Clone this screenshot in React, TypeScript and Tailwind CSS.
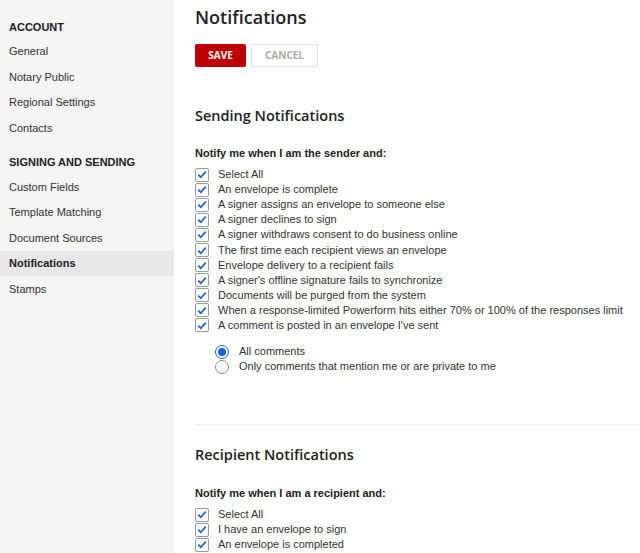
import React from "react";

const Check = () => (
  <span className="flex h-[14px] w-[14px] shrink-0 items-center justify-center rounded-[2px] border border-[#9a9a9a] bg-white">
    <svg width="10" height="9" viewBox="0 0 10 9">
      <path d="M1.2 4.6 L3.8 7.2 L8.8 1.6" fill="none" stroke="#1f5fd6" strokeWidth="1.7" />
    </svg>
  </span>
);

const Row = ({ label }: { label: string }) => (
  <div className="flex h-[15.1px] items-center gap-[9px]">
    <Check />
    <span className="text-[11px] leading-none text-[#333]">{label}</span>
  </div>
);

const sender = [
  "Select All",
  "An envelope is complete",
  "A signer assigns an envelope to someone else",
  "A signer declines to sign",
  "A signer withdraws consent to do business online",
  "The first time each recipient views an envelope",
  "Envelope delivery to a recipient fails",
  "A signer's offline signature fails to synchronize",
  "Documents will be purged from the system",
  "When a response-limited Powerform hits either 70% or 100% of the responses limit",
  "A comment is posted in an envelope I've sent",
];

const recipient = ["Select All", "I have an envelope to sign", "An envelope is completed"];

const NavItem = ({ label, active }: { label: string; active?: boolean }) => (
  <div className={`flex h-[25.5px] items-center px-[9px] text-[11px] ${active ? "bg-[#e7e7e7] font-bold text-[#222]" : "text-[#333]"}`}>
    {label}
  </div>
);

export default function App() {
  return (
    <div className="flex h-[553px] w-[640px] overflow-hidden bg-white" style={{ fontFamily: '"Liberation Sans", Arial, sans-serif' }}>
      <aside className="w-[174px] shrink-0 bg-[#f4f4f4] pt-[19px]">
        <div className="px-[9px] pb-[3px] text-[11px] font-bold text-[#222]">ACCOUNT</div>
        <NavItem label="General" />
        <NavItem label="Notary Public" />
        <NavItem label="Regional Settings" />
        <NavItem label="Contacts" />
        <div className="px-[9px] pb-[4px] pt-[13px] text-[11px] font-bold text-[#222]">SIGNING AND SENDING</div>
        <NavItem label="Custom Fields" />
        <NavItem label="Template Matching" />
        <NavItem label="Document Sources" />
        <NavItem label="Notifications" active />
        <NavItem label="Stamps" />
      </aside>
      <main className="flex-1 pl-[21px]">
        <h1 className="pt-[5px] text-[18px] font-semibold leading-[24px] text-[#222]" style={{ fontFamily: '"Open Sans", sans-serif' }}>
          Notifications
        </h1>
        <div className="mt-[15px] flex gap-[5px]">
          <button className="h-[23px] w-[51px] rounded-[2px] bg-[#c00000] text-[10px] font-bold text-white" style={{ fontFamily: '"Open Sans", sans-serif' }}>SAVE</button>
          <button className="h-[23px] w-[67px] rounded-[2px] border border-[#e2e2e2] bg-white text-[10px] font-bold text-[#aaa]" style={{ fontFamily: '"Open Sans", sans-serif' }}>CANCEL</button>
        </div>
        <h2 className="mt-[39px] text-[14.5px] font-semibold leading-[20px] text-[#222]" style={{ fontFamily: '"Open Sans", sans-serif' }}>
          Sending Notifications
        </h2>
        <div className="mt-[20px] text-[11px] font-bold leading-[14px] text-[#222]">Notify me when I am the sender and:</div>
        <div className="mt-[7px] flex flex-col">
          {sender.map((s) => (
            <Row key={s} label={s} />
          ))}
        </div>
        <div className="mt-[11px] flex flex-col pl-[20px]">
          <div className="flex h-[15px] items-center gap-[10px]">
            <span className="flex h-[14px] w-[14px] items-center justify-center rounded-full border border-[#1f5fd6] bg-white">
              <span className="h-[8px] w-[8px] rounded-full bg-[#1f5fd6]" />
            </span>
            <span className="text-[11px] text-[#333]">All comments</span>
          </div>
          <div className="flex h-[15px] items-center gap-[10px]">
            <span className="h-[14px] w-[14px] rounded-full border border-[#8a8a8a] bg-white" />
            <span className="text-[11px] text-[#333]">Only comments that mention me or are private to me</span>
          </div>
        </div>
        <div className="mt-[50px] h-px bg-[#ececec]" />
        <h2 className="mt-[20px] text-[14.5px] font-semibold leading-[20px] text-[#222]" style={{ fontFamily: '"Open Sans", sans-serif' }}>
          Recipient Notifications
        </h2>
        <div className="mt-[21px] text-[11px] font-bold leading-[14px] text-[#222]">Notify me when I am a recipient and:</div>
        <div className="mt-[7px] flex flex-col">
          {recipient.map((s) => (
            <Row key={s} label={s} />
          ))}
        </div>
      </main>
    </div>
  );
}
